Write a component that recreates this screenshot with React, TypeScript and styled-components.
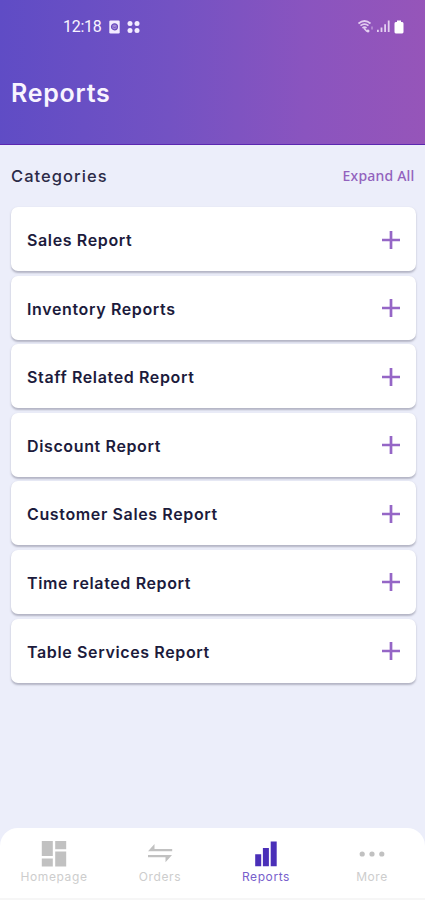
import React from "react";
import styled, { createGlobalStyle } from "styled-components";

const GlobalStyle = createGlobalStyle`
  * { box-sizing: border-box; }
  body { margin: 0; background: #eceefa; font-family: Inter, "Liberation Sans", sans-serif; }
`;

const Screen = styled.div`
  display: flex;
  flex-direction: column;
  width: 100%;
  height: 900px;
  overflow: hidden;
  background: #eceefa;
`;

const Header = styled.header`
  height: 145px;
  flex: none;
  background: linear-gradient(91deg, #5f4cc5 0%, #7352c3 40%, #8a54bf 72%, #9655b9 100%);
  border-bottom: 1px solid #5b27b0;
  color: #f8f4ff;
`;

const StatusBar = styled.div`
  display: flex;
  align-items: center;
  height: 53px;
  padding: 0 21.5px 0 63px;
`;

const Clock = styled.span`
  width: 39px;
  margin-right: 7px;
  font: 400 16px/20px Roboto, sans-serif;
  letter-spacing: -0.3px;
  white-space: nowrap;
`;

const StatusIcons = styled.div`
  display: flex;
  align-items: center;
  gap: 7px;
`;

const SignalIcons = styled(StatusIcons)`
  margin-left: auto;
  gap: 4px;
`;

const Title = styled.h1`
  margin: 24px 0 0 11px;
  font-size: 25px;
  line-height: 32px;
  font-weight: 600;
  letter-spacing: 0.75px;
`;

const SectionBar = styled.div`
  display: flex;
  justify-content: space-between;
  align-items: center;
  height: 62px;
  padding: 0 10.5px 0 11px;
`;

const SectionTitle = styled.h2`
  margin: 0;
  color: #2c2b48;
  font-size: 16.5px;
  font-weight: 500;
  letter-spacing: 1.05px;
`;

const ExpandButton = styled.button`
  padding: 0;
  border: 0;
  background: none;
  color: #9262bd;
  font: 500 14px/20px "Noto Sans", sans-serif;
  letter-spacing: 0.2px;
`;

const CategoryList = styled.main`
  display: flex;
  flex-direction: column;
  gap: 4.6px;
  padding: 0 9.5px 0 11px;
`;

const CategoryCard = styled.button`
  display: flex;
  align-items: center;
  justify-content: space-between;
  height: 64px;
  padding: 2px 16px 0 16px;
  border: 0;
  border-radius: 7px;
  background: #fff;
  box-shadow: 0 1.5px 2px rgba(70, 70, 95, 0.34);
  color: #1c1b3c;
  font: 600 16px/20px Inter, sans-serif;
  letter-spacing: 0.63px;
`;

const CategoryPlus = styled.svg`
  margin-bottom: 1px;
`;

const BottomNav = styled.nav`
  display: grid;
  grid-template-columns: repeat(4, 1fr);
  height: 72px;
  margin-top: auto;
  padding: 12px 0 0 1px;
  border-radius: 18px 18px 0 0;
  border-bottom: 2px solid #f6f6f6;
  background: #fff;
`;

const NavItem = styled.a<{ $active?: boolean }>`
  display: flex;
  flex-direction: column;
  align-items: center;
  color: ${({ $active }) => ($active ? "#4a2fb8" : "#c1c1c1")};
`;

const NavLabel = styled.span<{ $active?: boolean }>`
  margin-top: 2px;
  color: ${({ $active }) => ($active ? "#7860cc" : "#cdcdcd")};
  font: 400 12px/16px Inter, sans-serif;
  letter-spacing: 0.6px;
`;

const PlusIcon = () => (
  <CategoryPlus width="18" height="18" viewBox="0 0 18 18">
    <path d="M9 0v18M0 9h18" stroke="#9566c6" strokeWidth="2.7" />
  </CategoryPlus>
);

const NavIcon = ({ name }: { name: string }) => (
  <svg width="26" height="27" viewBox="0 0 26 27" fill="currentColor">
    {name === "Homepage" && <path d="M.8 1h11v15h-11zM14.2 1h11v8.2h-11zM.8 18.4h11v8h-11zM14.2 11.5h11v14.9h-11z" />}
    {name === "Orders" && <path d="M1 11.2 7.5 4v5h17.7v2.2zM1 15h24l-6.5 7.2v-5H1z" />}
    {name === "Reports" && <path d="M2.2 14.3h6v12h-6zM9.9 8h6v18.3h-6zM17.7 1.5h6v24.8h-6z" />}
    {name === "More" && (
      <>
        <circle cx="3.2" cy="14" r="2.6" />
        <circle cx="13" cy="14" r="2.6" />
        <circle cx="22.8" cy="14" r="2.6" />
      </>
    )}
  </svg>
);

const categories = [
  "Sales Report",
  "Inventory Reports",
  "Staff Related Report",
  "Discount Report",
  "Customer Sales Report",
  "Time related Report",
  "Table Services Report",
];

const tabs = ["Homepage", "Orders", "Reports", "More"];

export default function App() {
  return (
    <>
      <GlobalStyle />
      <Screen>
        <Header>
          <StatusBar>
            <Clock>12:18</Clock>
            <StatusIcons>
              <svg width="11" height="14" viewBox="0 0 11 14">
                <rect x=".3" y=".5" width="10.4" height="13" rx="1.2" fill="#f3ecff" />
                <circle cx="5.5" cy="6.8" r="3" fill="#a48bd6" stroke="#6b4dbf" strokeWidth="1.2" />
                <path d="M4 6.5 5.5 8 7 6.5" fill="none" stroke="#6b4dbf" />
              </svg>
              <svg width="13" height="14" viewBox="0 0 13 14" fill="#f3ecff">
                <circle cx="3" cy="3.4" r="2.5" />
                <circle cx="10" cy="3.4" r="2.5" />
                <circle cx="3" cy="10.4" r="2.5" />
                <circle cx="10" cy="10.4" r="2.5" />
              </svg>
            </StatusIcons>
            <SignalIcons>
              <svg width="15" height="13" viewBox="0 0 15 13" fill="none" stroke="#e3cdf0">
                <path d="M.5 3.5Q6.5-1.5 12.5 3.5M2.5 5.7Q6.5 2.4 10.5 5.7M4.5 8Q6.5 6.4 8.5 8" strokeWidth="1.7" />
                <path d="m6 8.3 3 3.2" strokeWidth="1.6" />
                <circle cx="10" cy="11" r="1.1" fill="#fff" />
                <path d="M14 6.5v3" strokeWidth=".8" />
              </svg>
              <svg width="13" height="13" viewBox="0 0 13 13" fill="#e3cff0">
                <path d="M0 9.7h1.8V12H0zM3.6 7.5h1.8V12H3.6zM7.2 4.2H9V12H7.2zM10.8.5h1.8V12h-1.8z" />
              </svg>
              <svg width="10" height="14" viewBox="0 0 10 14" fill="#fff">
                <path d="M3 .4h4v1.5h1.2Q9.5 2 9.5 3.4v8.7q0 1.4-1.3 1.4H1.8Q.5 13.5.5 12.1V3.4Q.5 2 1.8 1.9H3z" />
              </svg>
            </SignalIcons>
          </StatusBar>
          <Title>Reports</Title>
        </Header>
        <SectionBar>
          <SectionTitle>Categories</SectionTitle>
          <ExpandButton>Expand All</ExpandButton>
        </SectionBar>
        <CategoryList>
          {categories.map((name) => (
            <CategoryCard key={name}>
              {name}
              <PlusIcon />
            </CategoryCard>
          ))}
        </CategoryList>
        <BottomNav>
          {tabs.map((name) => (
            <NavItem key={name} $active={name === "Reports"}>
              <NavIcon name={name} />
              <NavLabel $active={name === "Reports"}>{name}</NavLabel>
            </NavItem>
          ))}
        </BottomNav>
      </Screen>
    </>
  );
}
